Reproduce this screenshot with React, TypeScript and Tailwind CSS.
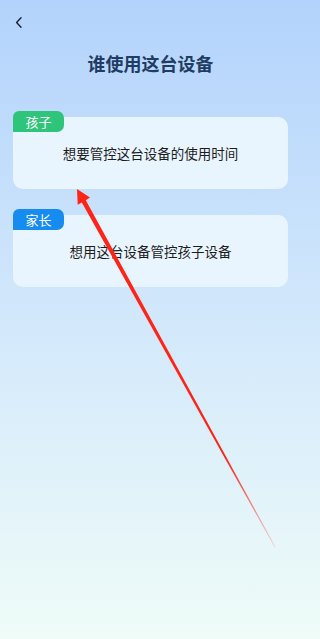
import React from "react"

const cards = [
  { tag: "孩子", tagColor: "bg-[#2ec47a]", text: "想要管控这台设备的使用时间" },
  { tag: "家长", tagColor: "bg-[#168cf0]", text: "想用这台设备管控孩子设备" },
]

function Arrow() {
  // annotation arrow drawn over the page
  return (
    <svg className="pointer-events-none absolute left-0 top-0" width="301" height="639" viewBox="0 0 301 639">
      <defs>
        <linearGradient id="fade" x1="77" y1="189" x2="275" y2="547" gradientUnits="userSpaceOnUse">
          <stop offset="0" stopColor="#ff2416" />
          <stop offset="0.75" stopColor="#ff2416" />
          <stop offset="1" stopColor="#ff2416" stopOpacity="0.15" />
        </linearGradient>
      </defs>
      <polygon
        points="77,189 90,197.5 85.8,200.2 275.4,546.8 274.6,547.2 81.8,202.4 77.7,204.8"
        fill="url(#fade)"
      />
    </svg>
  )
}

export default function App() {
  return (
    <div
      className="h-[639px] w-full overflow-hidden bg-gradient-to-b from-[#b3d3fc] via-[#d2e8fb] to-[#effcf8]"
      style={{ fontFamily: '"Noto Sans CJK SC", "Noto Sans", sans-serif' }}
    >
      <div className="relative h-full w-[301px]">
        <div className="pl-[15px] pt-[17px]">
          <svg width="8" height="11" viewBox="0 0 8 11" fill="none">
            <path d="M6 0.8 L1.6 5.5 L6 10.2" stroke="#1c2233" strokeWidth="1.4" strokeLinecap="round" strokeLinejoin="round" />
          </svg>
        </div>

        <h1 className="mt-[23px] text-center text-[18px] font-bold leading-[24px] text-[#1f3c63]">谁使用这台设备</h1>

        <div className="mt-[42px] flex flex-col gap-[26px] px-[13px]">
          {cards.map((c) => (
            <div key={c.tag} className="relative flex h-[72px] items-center justify-center rounded-[10px] bg-[#e9f5fe]">
              <div
                className={`absolute -top-[6px] left-0 flex h-[21px] w-[51px] items-center justify-center rounded-tl-[6px] rounded-tr-[7px] rounded-br-[7px] text-[13px] leading-none text-white ${c.tagColor}`}
              >
                {c.tag}
              </div>
              <p className="text-[13.5px] leading-[20px] text-[#1c1c1c]">{c.text}</p>
            </div>
          ))}
        </div>

        <Arrow />
      </div>
    </div>
  )
}
